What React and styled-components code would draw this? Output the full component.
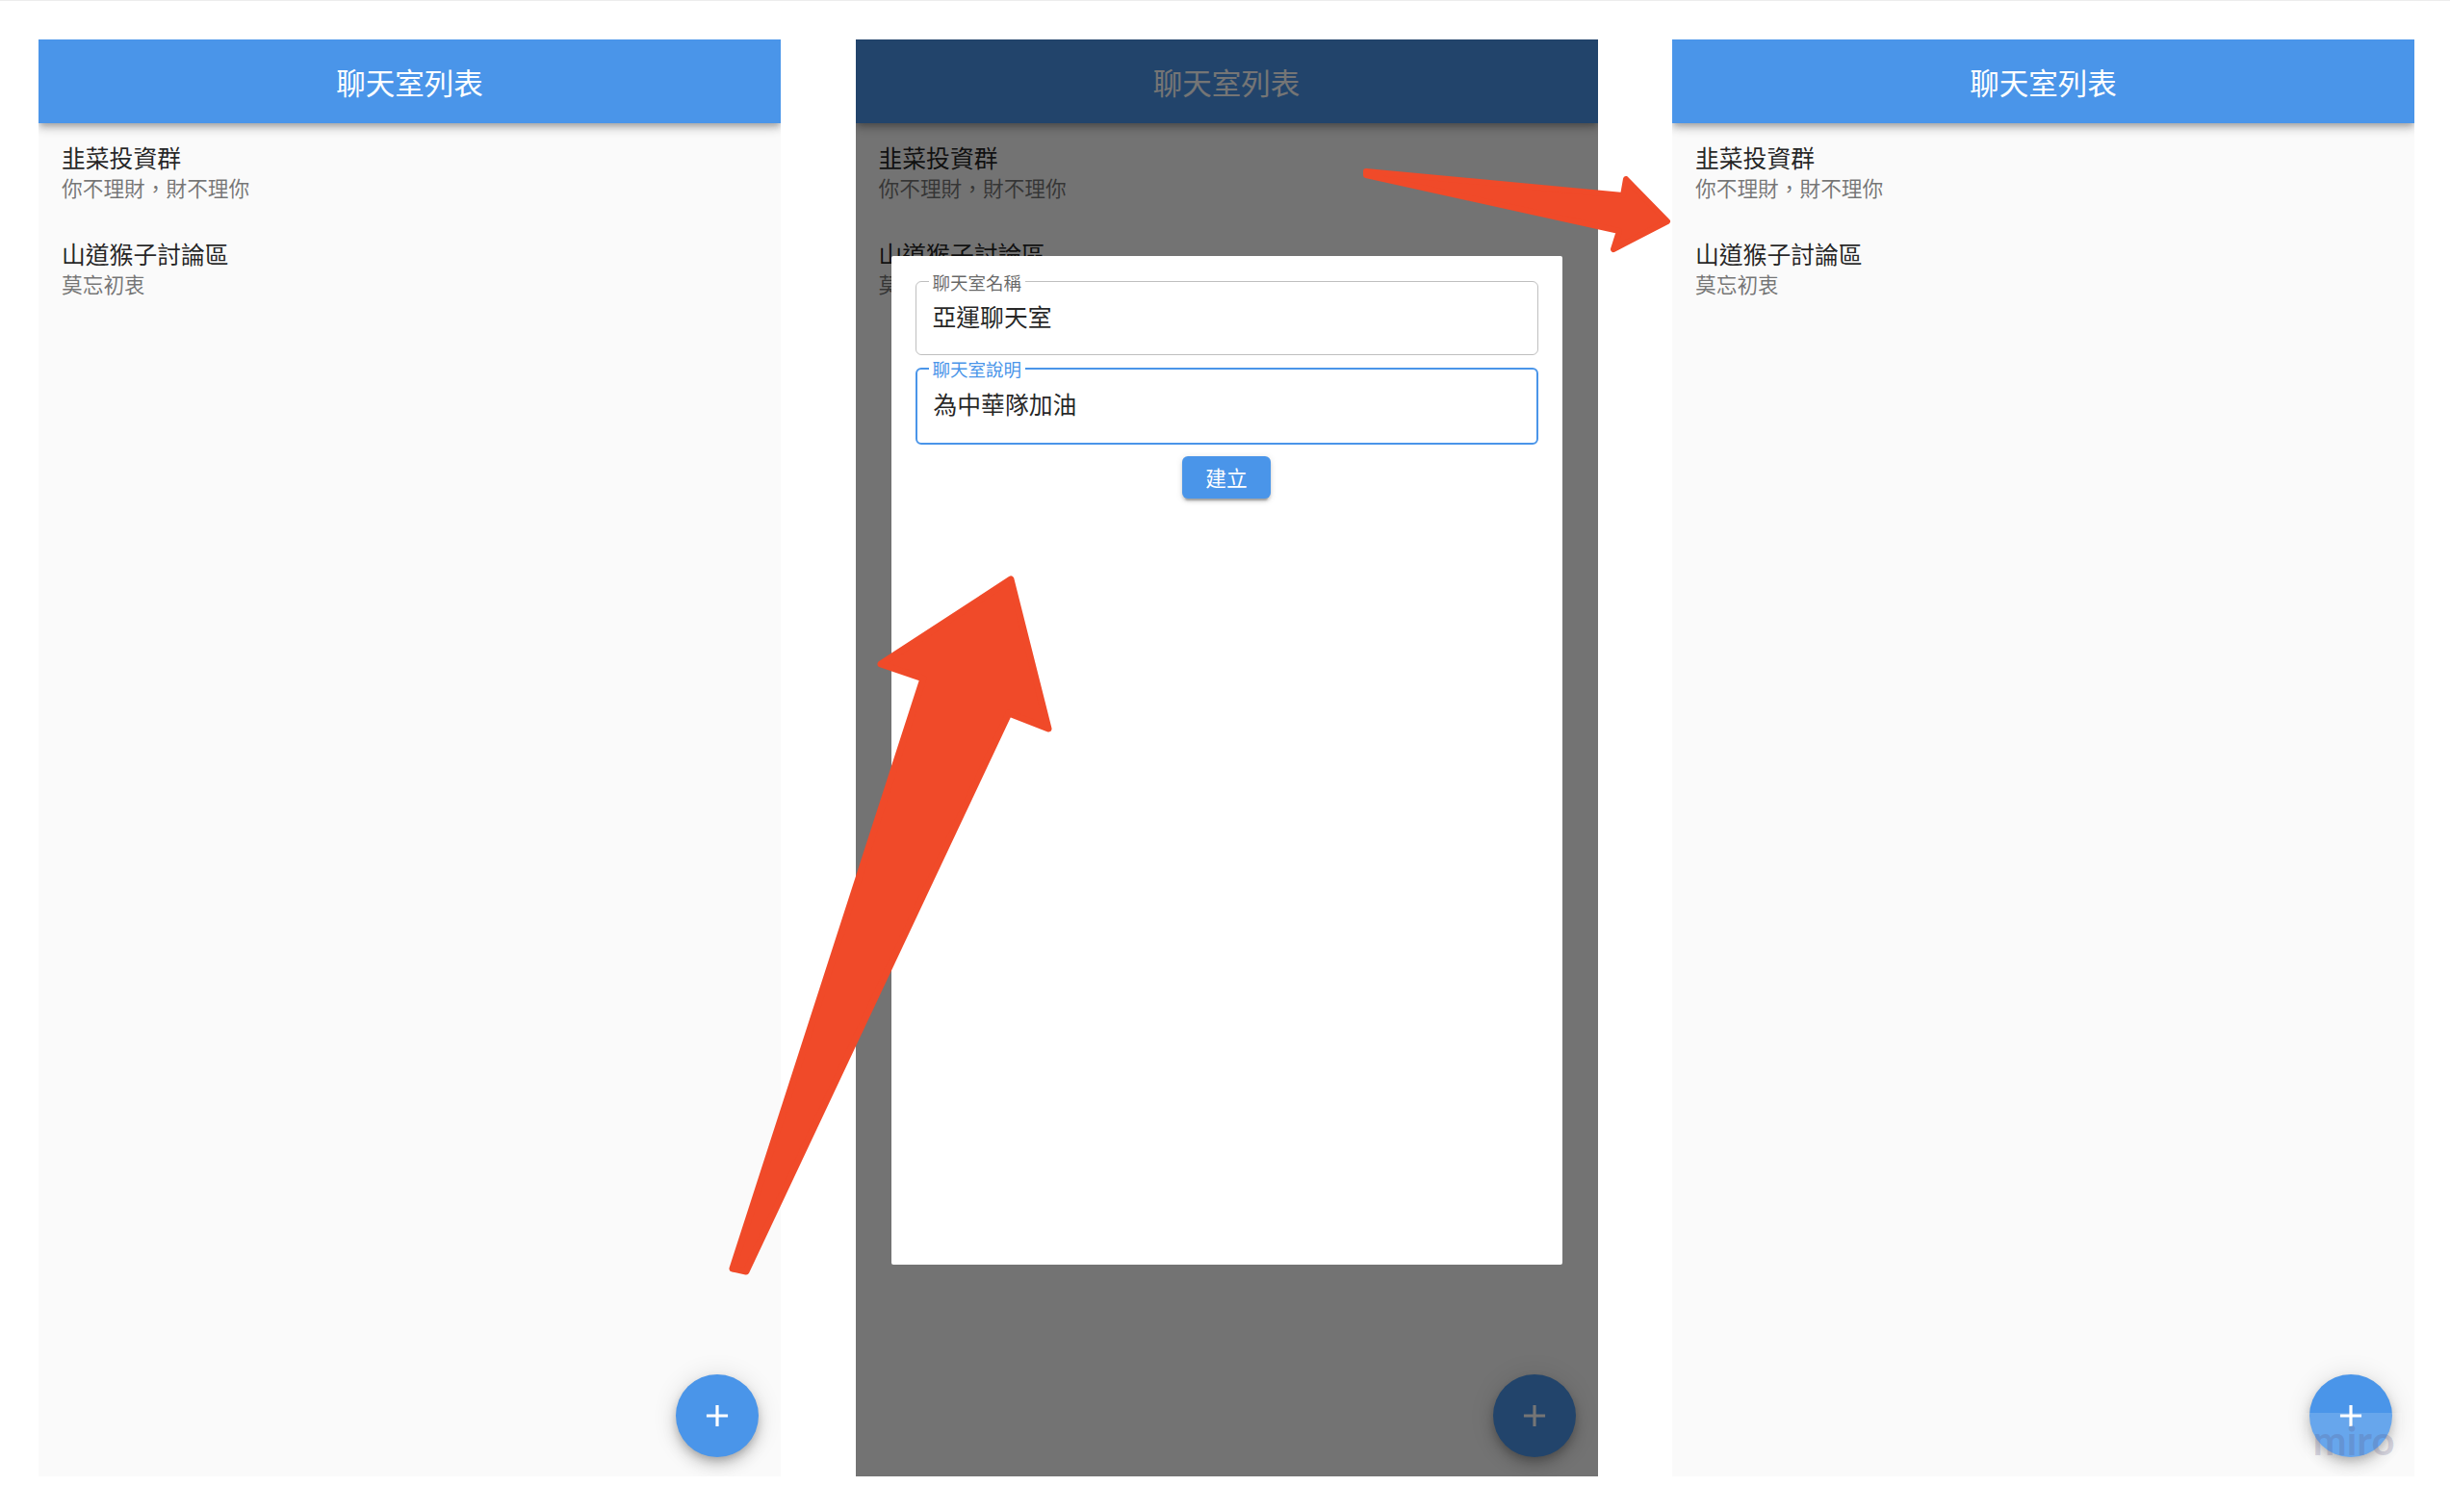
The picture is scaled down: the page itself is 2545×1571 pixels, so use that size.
import React from 'react';
import styled, { createGlobalStyle } from 'styled-components';

const GlobalStyle = createGlobalStyle`
  html, body { margin: 0; padding: 0; background: #ffffff; }
  body { font-family: "Noto Sans CJK TC", "Noto Sans", sans-serif; }
  * { box-sizing: border-box; }
`;

const BLUE = '#4a95e9';
const FONT = '"Noto Sans CJK TC", "Noto Sans", sans-serif';

const Page = styled.div`
  position: relative;
  width: 2545px;
  height: 1571px;
  border-top: 1px solid #ececec;
  padding: 40px 37px 0 40px;
  display: grid;
  grid-template-columns: repeat(3, 771px);
  column-gap: 77.5px;
  align-items: start;
  overflow: hidden;
`;

const Panel = styled.section`
  position: relative;
  height: 1493px;
  background: #fafafa;
  overflow: hidden;
  display: flex;
  flex-direction: column;
  font-family: ${FONT};
`;

const Header = styled.header`
  position: relative;
  z-index: 1;
  flex: none;
  height: 87px;
  background: ${BLUE};
  display: flex;
  align-items: center;
  justify-content: center;
  color: #ffffff;
  font-size: 30.5px;
  line-height: 1;
  padding-top: 2px;
  box-shadow: 0 3px 6px -1.5px rgba(0, 0, 0, 0.2), 0 6px 8px 0 rgba(0, 0, 0, 0.14),
    0 1.5px 15px 0 rgba(0, 0, 0, 0.12);
`;

const List = styled.ul`
  list-style: none;
  margin: 0;
  padding: 5px 0 0;
`;

const Item = styled.li`
  display: flex;
  flex-direction: column;
  padding: 14px 24px 23px;
`;

const ItemTitle = styled.span`
  font-size: 24.8px;
  line-height: 33px;
  color: rgba(0, 0, 0, 0.87);
`;

const ItemSub = styled.span`
  font-size: 21.7px;
  line-height: 30px;
  color: rgba(0, 0, 0, 0.54);
`;

const Fab = styled.button`
  position: absolute;
  right: 23px;
  bottom: 20px;
  width: 86px;
  height: 86px;
  border: none;
  border-radius: 50%;
  padding: 0;
  background: ${BLUE};
  color: #ffffff;
  display: flex;
  align-items: center;
  justify-content: center;
  box-shadow: 0 4.5px 8px -1.5px rgba(0, 0, 0, 0.2), 0 9px 15px 0 rgba(0, 0, 0, 0.14),
    0 1.5px 27px 0 rgba(0, 0, 0, 0.12);
`;

const Overlay = styled.div`
  position: absolute;
  inset: 0;
  z-index: 3;
  background: rgba(0, 0, 0, 0.54);
  display: flex;
  align-items: flex-start;
  padding: 225px 37px 0;
`;

const Dialog = styled.div`
  flex: 1;
  height: 1048px;
  background: #ffffff;
  border-radius: 2px;
  display: flex;
  flex-direction: column;
  padding: 15.5px 25px 0;
  gap: 3px;
`;

const Field = styled.fieldset`
  margin: 0;
  min-width: 0;
  padding: 6.5px 17px ${(p) => (p.$focused ? '23px' : '22px')};
  border: ${(p) => (p.$focused ? `2px solid ${BLUE}` : '1px solid rgba(0, 0, 0, 0.25)')};
  border-radius: 6px;
`;

const Legend = styled.legend`
  margin-left: ${(p) => (p.$focused ? '-5px' : '-4px')};
  padding: 0 4px;
  font-size: 18.5px;
  line-height: 22px;
  color: ${(p) => (p.$focused ? BLUE : 'rgba(0, 0, 0, 0.6)')};
`;

const Input = styled.input`
  display: block;
  width: 100%;
  height: 36px;
  border: none;
  outline: none;
  padding: 0;
  margin: 0;
  background: transparent;
  font-family: ${FONT};
  font-size: 24.8px;
  line-height: 36px;
  color: rgba(0, 0, 0, 0.87);
`;

const CreateButton = styled.button`
  align-self: center;
  margin-top: 9px;
  width: 92px;
  height: 44px;
  border: none;
  border-radius: 6px;
  background: ${BLUE};
  color: #ffffff;
  font-family: ${FONT};
  font-size: 21.7px;
  line-height: 1;
  padding: 0;
  box-shadow: 0 4.5px 1.5px -3px rgba(0, 0, 0, 0.2), 0 3px 3px 0 rgba(0, 0, 0, 0.14),
    0 1.5px 7.5px 0 rgba(0, 0, 0, 0.12);
`;

const Watermark = styled.div`
  position: absolute;
  right: 13px;
  bottom: 0;
  z-index: 4;
  width: 100px;
  height: 66px;
  background: rgba(255, 255, 255, 0.16);
  display: flex;
  align-items: flex-end;
  justify-content: center;
  padding-bottom: 18px;
  font-family: Lato, "Open Sans", sans-serif;
  font-weight: 700;
  font-size: 42px;
  line-height: 40px;
  color: rgba(90, 85, 130, 0.22);
`;

const Arrows = styled.svg`
  position: absolute;
  left: 0;
  top: -1px;
  z-index: 10;
  pointer-events: none;
`;

const PlusIcon = () => (
  <svg width="38" height="38" viewBox="0 0 24 24" fill="currentColor" aria-hidden="true">
    <path d="M19 13h-6v6h-2v-6H5v-2h6V5h2v6h6v2z" />
  </svg>
);

const rooms = [
  { name: '韭菜投資群', desc: '你不理財，財不理你' },
  { name: '山道猴子討論區', desc: '莫忘初衷' },
];

const ChatList = () => (
  <>
    <Header>聊天室列表</Header>
    <List>
      {rooms.map((r) => (
        <Item key={r.name}>
          <ItemTitle>{r.name}</ItemTitle>
          <ItemSub>{r.desc}</ItemSub>
        </Item>
      ))}
    </List>
    <Fab aria-label="add">
      <PlusIcon />
    </Fab>
  </>
);

export default function App() {
  return (
    <>
      <GlobalStyle />
      <Page>
        <Panel>
          <ChatList />
        </Panel>
        <Panel>
          <ChatList />
          <Overlay>
            <Dialog>
              <Field>
                <Legend>聊天室名稱</Legend>
                <Input readOnly value="亞運聊天室" />
              </Field>
              <Field $focused>
                <Legend $focused>聊天室說明</Legend>
                <Input readOnly value="為中華隊加油" />
              </Field>
              <CreateButton>建立</CreateButton>
            </Dialog>
          </Overlay>
        </Panel>
        <Panel>
          <ChatList />
          <Watermark>miro</Watermark>
        </Panel>
        <Arrows width="2545" height="1571" viewBox="0 0 2545 1571">
          <path
            d="M 761 1318 L 959 705 L 915 690 L 1050 602 L 1089 757 L 1048 741 L 775 1321 Z"
            fill="#f04a29"
            stroke="#f04a29"
            strokeWidth="7"
            strokeLinejoin="round"
          />
          <path
            d="M 1419 178 L 1686 203 L 1689 186 L 1732 230 L 1676 259 L 1682 240 L 1419 182 Z"
            fill="#f04a29"
            stroke="#f04a29"
            strokeWidth="6"
            strokeLinejoin="round"
          />
        </Arrows>
      </Page>
    </>
  );
}
